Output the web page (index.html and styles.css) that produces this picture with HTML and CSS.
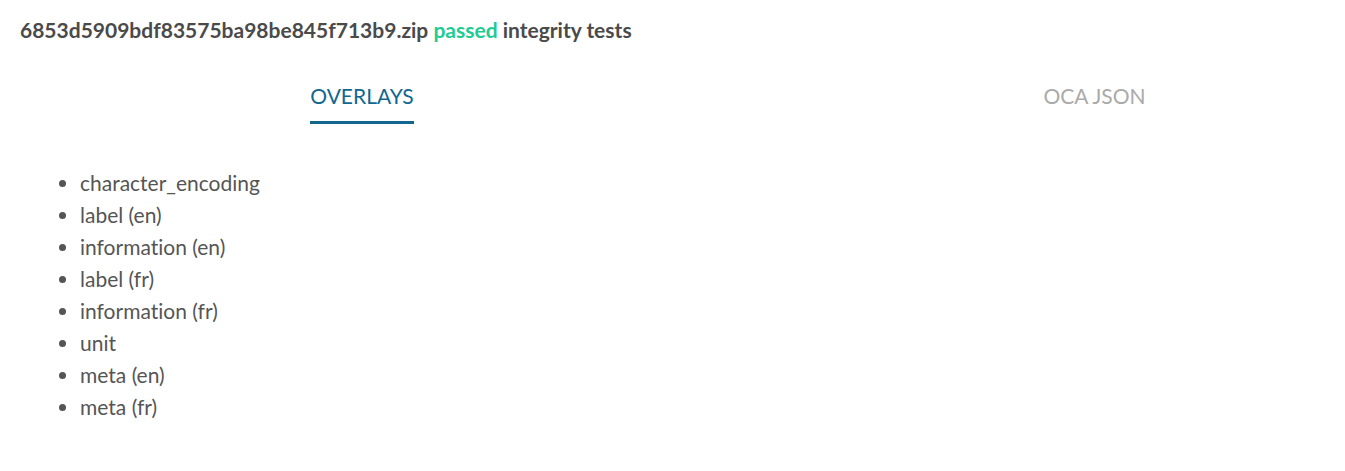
FILE: index.html
```html
<!DOCTYPE html>
<html lang="en">
<head>
<meta charset="utf-8">
<title>Integrity</title>
<link rel="stylesheet" href="styles.css">
</head>
<body>
<div class="page">
  <h1 class="title">6853d5909bdf83575ba98be845f713b9.zip <span class="ok">passed</span> integrity tests</h1>
  <div class="tabs">
    <div class="tab tab-left"><span class="tab-label active">OVERLAYS</span></div>
    <div class="tab tab-right"><span class="tab-label">OCA JSON</span></div>
  </div>
  <ul class="overlays">
    <li>character_encoding</li>
    <li>label (en)</li>
    <li>information (en)</li>
    <li>label (fr)</li>
    <li>information (fr)</li>
    <li>unit</li>
    <li>meta (en)</li>
    <li>meta (fr)</li>
  </ul>
</div>
</body>
</html>
```

FILE: styles.css
```css
html, body {
  margin: 0;
  padding: 0;
  background: #ffffff;
}
body {
  font-family: Lato, "Open Sans", sans-serif;
  color: #4e4e4e;
  font-variant-ligatures: none;
}
.page {
  padding: 17px 20px 0 20px;
}
.title {
  margin: 0;
  font-size: 21px;
  line-height: 26px;
  font-weight: 700;
  color: #4a4a4a;
}
.ok {
  color: #1fcc93;
}
.tabs {
  display: grid;
  grid-template-columns: 724px 1fr;
  margin: 41px -20px 0 -20px;
}
.tab {
  display: flex;
  justify-content: center;
}
.tab-right {
  padding-left: 120px;
}
.tab-label {
  font-size: 21px;
  line-height: 24px;
  padding-bottom: 13px;
  border-bottom: 3px solid transparent;
  color: #aaaaaa;
}
.tab-label.active {
  color: #11678f;
  border-bottom-color: #11678f;
}
.overlays {
  margin: 43px 0 0 0;
  padding-left: 60px;
  font-size: 21px;
  line-height: 32px;
  color: #555555;
}
```
